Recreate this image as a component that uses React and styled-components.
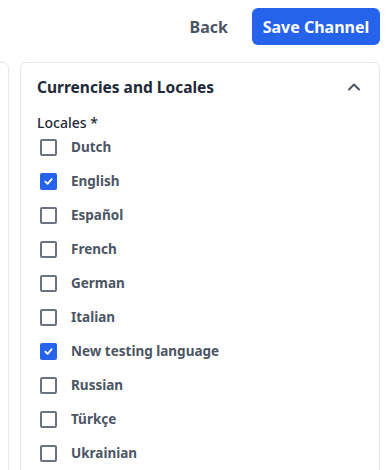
import React, { useState } from 'react';
import styled, { createGlobalStyle } from 'styled-components';

const GlobalStyle = createGlobalStyle`
  body {
    margin: 0;
    background: #ffffff;
    font-family: 'Noto Sans', 'Open Sans', sans-serif;
    overflow: hidden;
  }
`;

const Page = styled.div`
  padding: 8px 7px 0 0;
`;

const Toolbar = styled.div`
  display: flex;
  justify-content: flex-end;
  align-items: center;
  gap: 24px;
  height: 37px;
`;

const BackButton = styled.button`
  border: none;
  background: none;
  padding: 0;
  font-family: inherit;
  font-size: 16px;
  font-weight: 700;
  color: #4b5563;
  cursor: pointer;
`;

const SaveButton = styled.button`
  height: 37px;
  width: 128px;
  border: none;
  border-radius: 6px;
  background: #2563eb;
  color: #ffffff;
  font-family: inherit;
  font-size: 16px;
  font-weight: 700;
  cursor: pointer;
`;

const Columns = styled.div`
  display: grid;
  grid-template-columns: 50px 1fr;
  gap: 11px;
  margin-top: 17px;
  margin-left: -41px;
`;

const Panel = styled.div`
  border: 1px solid #e5e7eb;
  border-radius: 6px;
  height: 420px;
  box-sizing: border-box;
`;

const Card = styled(Panel)`
  padding: 13px 16px 0 16px;
`;

const CardHeader = styled.div`
  display: flex;
  justify-content: space-between;
  align-items: center;
  height: 22px;
`;

const CardTitle = styled.h3`
  margin: 0;
  font-size: 15.5px;
  font-weight: 700;
  color: #1f2937;
`;

const Toggle = styled.button`
  border: none;
  background: none;
  padding: 0;
  margin-right: 2px;
  display: flex;
  color: #4b5563;
  cursor: pointer;
`;

const FieldLabel = styled.div`
  margin-top: 15px;
  font-size: 14px;
  font-weight: 500;
  color: #1f2937;
  line-height: 20px;
`;

const List = styled.div`
  display: flex;
  flex-direction: column;
  margin-top: -3px;
`;

const Row = styled.label`
  display: flex;
  align-items: center;
  gap: 14px;
  height: 34px;
  padding-left: 3px;
  cursor: pointer;
`;

const Box = styled.span`
  width: 17px;
  height: 17px;
  box-sizing: border-box;
  border-radius: 2px;
  border: ${(p) => (p.$checked ? 'none' : '2px solid #6b7280')};
  background: ${(p) => (p.$checked ? '#2563eb' : '#ffffff')};
  display: flex;
  align-items: center;
  justify-content: center;
  flex-shrink: 0;
`;

const RowText = styled.span`
  font-size: 13.5px;
  font-weight: 700;
  color: #4b5563;
`;

const locales = [
  'Dutch',
  'English',
  'Español',
  'French',
  'German',
  'Italian',
  'New testing language',
  'Russian',
  'Türkçe',
  'Ukrainian',
];

const App = () => {
  const [checked, setChecked] = useState(['English', 'New testing language']);

  const toggle = (name) =>
    setChecked((c) => (c.includes(name) ? c.filter((x) => x !== name) : [...c, name]));

  return (
    <Page>
      <GlobalStyle />
      <Toolbar>
        <BackButton>Back</BackButton>
        <SaveButton>Save Channel</SaveButton>
      </Toolbar>
      <Columns>
        <Panel />
        <Card>
          <CardHeader>
            <CardTitle>Currencies and Locales</CardTitle>
            <Toggle aria-label="Collapse">
              <svg width="14" height="14" viewBox="0 0 14 14" fill="none">
                <path d="M2 9.5 7 4.5l5 5" stroke="currentColor" strokeWidth="2" strokeLinecap="round" strokeLinejoin="round" />
              </svg>
            </Toggle>
          </CardHeader>
          <FieldLabel>Locales *</FieldLabel>
          <List>
            {locales.map((name) => {
              const on = checked.includes(name);
              return (
                <Row key={name} onClick={() => toggle(name)}>
                  <Box $checked={on}>
                    {on && (
                      <svg width="11" height="11" viewBox="0 0 12 12" fill="none">
                        <path d="M2.5 6.2 5 8.5l4.5-5" stroke="#fff" strokeWidth="2" strokeLinecap="round" strokeLinejoin="round" />
                      </svg>
                    )}
                  </Box>
                  <RowText>{name}</RowText>
                </Row>
              );
            })}
          </List>
        </Card>
      </Columns>
    </Page>
  );
};

export default App;
